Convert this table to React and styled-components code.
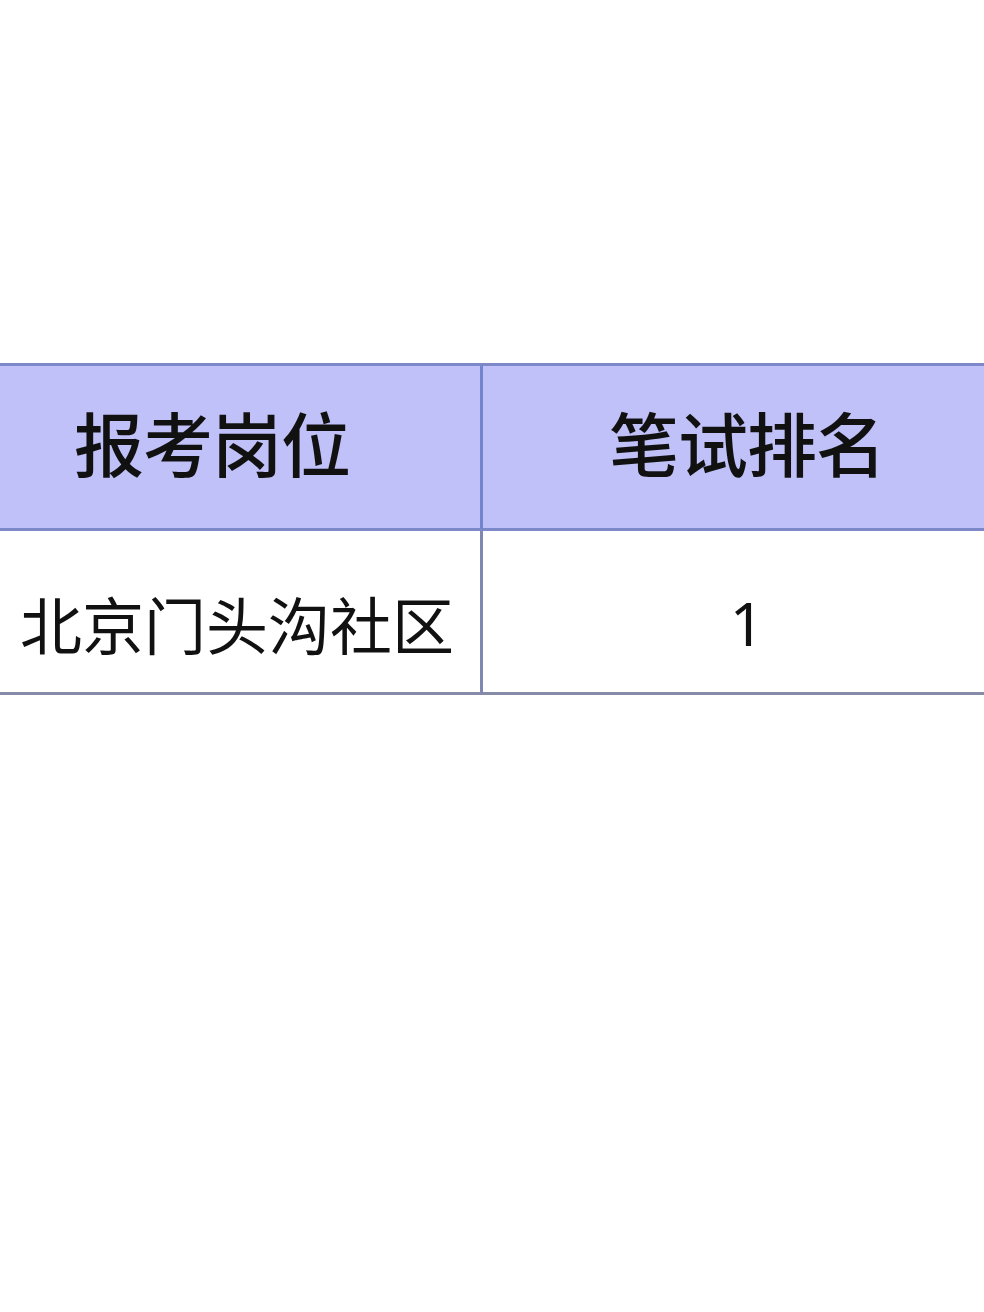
import styled, { createGlobalStyle } from "styled-components";

const GlobalStyle = createGlobalStyle`
  html, body {
    margin: 0;
    padding: 0;
    background: #fff;
  }
  body {
    width: 984px;
    height: 1312px;
    overflow: hidden;
    font-family: "Noto Sans CJK SC", "Noto Sans", sans-serif;
  }
`;

const Page = styled.div`
  width: 984px;
  height: 1312px;
  padding-top: 363px;
  box-sizing: border-box;
  overflow: hidden;
`;

const Table = styled.div`
  display: grid;
  grid-template-columns: 539px 528px;
  margin-left: -56px;
  width: 1067px;
  border-top: 3px solid #7c88c8;
`;

const HeadCell = styled.div`
  height: 165px;
  background: #c0c1f8;
  border-bottom: 3px solid #7c88c8;
  border-right: ${(p) => (p.$last ? "none" : "3px solid #7484cc")};
  display: flex;
  align-items: center;
  justify-content: center;
  padding-bottom: 12px;
  box-sizing: border-box;
  font-size: 70px;
  font-weight: 500;
  color: #111;
  letter-spacing: -1px;
`;

const BodyCell = styled.div`
  height: 164px;
  background: #fff;
  border-bottom: 3px solid #868ca8;
  border-right: ${(p) => (p.$last ? "none" : "3px solid #8088b0")};
  display: flex;
  align-items: center;
  justify-content: center;
  padding-top: 22px;
  padding-left: ${(p) => p.$shift || 0}px;
  box-sizing: border-box;
  font-size: 62px;
  font-weight: 400;
  color: #111;
`;

const Num = styled.span`
  font-family: "Noto Sans", sans-serif;
  font-size: 60px;
`;

export default function App() {
  return (
    <Page>
      <GlobalStyle />
      <Table>
        <HeadCell>报考岗位</HeadCell>
        <HeadCell $last>笔试排名</HeadCell>
        <BodyCell $shift={50}>北京门头沟社区</BodyCell>
        <BodyCell $last>
          <Num>1</Num>
        </BodyCell>
      </Table>
    </Page>
  );
}
